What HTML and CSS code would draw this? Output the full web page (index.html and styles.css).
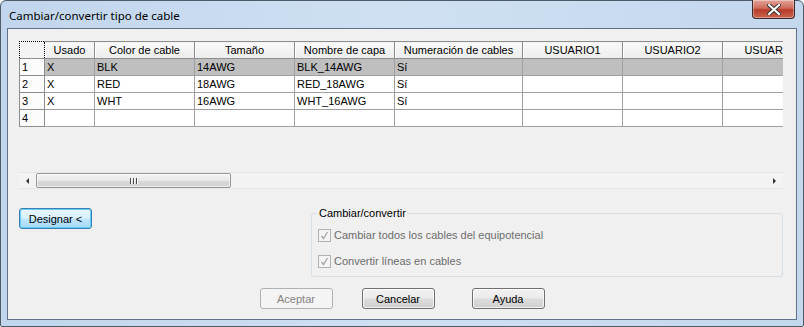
FILE: index.html
```html
<!DOCTYPE html>
<html lang="es">
  <head>
    <meta charset="UTF-8" />
    <title>Cambiar/convertir tipo de cable</title>
    <link rel="stylesheet" href="styles.css">
  </head>
  <body>
    <div class="window">
      <header class="titlebar">
        <span class="title">Cambiar/convertir tipo de cable</span>
        <button class="close" aria-label="Cerrar">
          <svg width="14" height="11" viewBox="0 0 14 11">
            <path d="M2 1 L12 10 M12 1 L2 10" stroke="#3b3b3b" stroke-width="4" stroke-linecap="square"/>
            <path d="M2 1 L12 10 M12 1 L2 10" stroke="#fff" stroke-width="2" stroke-linecap="square"/>
          </svg>
        </button>
      </header>

      <main class="client">
        <section class="grid">
          <div class="grid-body">
            <table>
              <colgroup>
                <col class="c-head" />
                <col class="c-50" />
                <col class="c-100" />
                <col class="c-100" />
                <col class="c-100" />
                <col class="c-128" />
                <col class="c-100" />
                <col class="c-100" />
                <col class="c-100" />
              </colgroup>
              <thead>
                <tr>
                  <th class="corner"></th>
                  <th>Usado</th>
                  <th>Color de cable</th>
                  <th>Tamaño</th>
                  <th>Nombre de capa</th>
                  <th>Numeración de cables</th>
                  <th>USUARIO1</th>
                  <th>USUARIO2</th>
                  <th>USUARIO3</th>
                </tr>
              </thead>
              <tbody>
                <tr class="selected">
                  <th>1</th><td>X</td><td>BLK</td><td>14AWG</td><td>BLK_14AWG</td><td>Sí</td><td></td><td></td><td></td>
                </tr>
                <tr>
                  <th>2</th><td>X</td><td>RED</td><td>18AWG</td><td>RED_18AWG</td><td>Sí</td><td></td><td></td><td></td>
                </tr>
                <tr>
                  <th>3</th><td>X</td><td>WHT</td><td>16AWG</td><td>WHT_16AWG</td><td>Sí</td><td></td><td></td><td></td>
                </tr>
                <tr>
                  <th>4</th><td></td><td></td><td></td><td></td><td></td><td></td><td></td><td></td>
                </tr>
              </tbody>
            </table>
          </div>
          <div class="hscroll">
            <span class="arrow left"></span>
            <span class="thumb"><i></i><i></i><i></i></span>
            <span class="track"></span>
            <span class="arrow right"></span>
          </div>
        </section>

        <div class="middle">
          <button class="btn is-default">Designar &lt;</button>
          <fieldset class="group">
            <legend>Cambiar/convertir</legend>
            <label class="check">
              <span class="box"><svg width="9" height="9" viewBox="0 0 9 9"><path d="M1.5 5 L3.5 7.5 L7.5 1" fill="none" stroke="#a8a8a8" stroke-width="1.4"/></svg></span>
              Cambiar todos los cables del equipotencial
            </label>
            <label class="check">
              <span class="box"><svg width="9" height="9" viewBox="0 0 9 9"><path d="M1.5 5 L3.5 7.5 L7.5 1" fill="none" stroke="#a8a8a8" stroke-width="1.4"/></svg></span>
              Convertir líneas en cables
            </label>
          </fieldset>
        </div>

        <footer class="actions">
          <button class="btn is-disabled">Aceptar</button>
          <button class="btn cancel">Cancelar</button>
          <button class="btn help">Ayuda</button>
        </footer>
      </main>
    </div>
  </body>
</html>
```

FILE: styles.css
```css
*,
*::before,
*::after {
  box-sizing: border-box;
  margin: 0;
  padding: 0;
}
body {
  background: #fff;
  font-family: "Liberation Sans", Arial, sans-serif;
  font-size: 11px;
  color: #000;
}

.window {
  width: 804px;
  height: 327px;
  display: flex;
  flex-direction: column;
  border: 1px solid #4f5b68;
  border-radius: 6px 6px 2px 2px;
  padding: 0 6px 6px;
  background: linear-gradient(to right, #c1d5ec, #cfe0f3 50%, #c3d7ed);
}

.titlebar {
  height: 27px;
  display: flex;
  align-items: flex-start;
  justify-content: space-between;
}
.title {
  font-family: "Noto Sans", "Open Sans", sans-serif;
  font-size: 11.5px;
  line-height: 16px;
  padding: 7px 0 0 2px;
  color: #000;
}
.close {
  width: 43px;
  height: 19px;
  margin: -1px 2px 0 0;
  border: 1px solid #3f2a2a;
  border-top: none;
  border-radius: 0 0 4px 4px;
  background: linear-gradient(#e3a59a, #cf6b5b 45%, #b83a2a 55%, #c9664f);
  box-shadow: inset 0 0 0 1px rgba(255, 255, 255, 0.35);
  display: grid;
  place-items: center;
}

.client {
  flex: 1;
  display: flex;
  flex-direction: column;
  border: 1px solid #5f7288;
  background: #f0f0f0;
  padding: 12px 13px 0 11px;
}

/* grid */
.grid {
  height: 148px;
  display: flex;
  flex-direction: column;
}
.grid-body {
  height: 131px;
  overflow: hidden;
}
table {
  border-collapse: collapse;
  table-layout: fixed;
  width: 803px;
}
.c-head { width: 25px; }
.c-50 { width: 50px; }
.c-100 { width: 100px; }
.c-128 { width: 128px; }

th,
td {
  height: 17px;
  padding: 0 2px;
  white-space: nowrap;
  overflow: hidden;
  font-weight: normal;
  text-align: left;
  line-height: 15px;
}
thead th {
  text-align: center;
  background: linear-gradient(#fafafa, #ececec);
  border-right: 1px solid #8d8d8d;
  border-bottom: 1px solid #8d8d8d;
  border-top: 1px solid #8d8d8d;
  box-shadow: inset 1px 0 #fff;
}
thead th.corner {
  border: 1px dotted #000;
  background: #f4f4f4;
}
tbody th {
  background: #fcfcfc;
  border: 1px solid #8d8d8d;
  padding-left: 2px;
}
tbody td {
  background: #fff;
  border-right: 1px solid #a0a0a0;
  border-bottom: 1px solid #a0a0a0;
  padding-left: 2px;
}
tbody tr.selected td {
  background: #bfbfbf;
}

.hscroll {
  height: 17px;
  display: flex;
  align-items: stretch;
  background: #f3f3f3;
  border-top: 1px solid #e6e6e6;
  border-bottom: 1px solid #e8e8e8;
}
.arrow {
  width: 17px;
  display: grid;
  place-items: center;
}
.arrow::before {
  content: "";
  border-top: 3px solid transparent;
  border-bottom: 3px solid transparent;
}
.arrow.left::before {
  border-right: 3px solid #333;
}
.arrow.right::before {
  border-left: 3px solid #333;
}
.thumb {
  width: 195px;
  border: 1px solid #979797;
  border-radius: 2px;
  background: linear-gradient(#f4f4f4, #e8e8e8 50%, #d9d9d9 51%, #d3d3d3);
  box-shadow: inset 0 0 0 1px rgba(255, 255, 255, 0.6);
  display: flex;
  justify-content: center;
  align-items: center;
  gap: 2px;
}
.thumb i {
  width: 1px;
  height: 6px;
  background: #4a4a4a;
  box-shadow: 1px 0 #fff;
}
.track {
  flex: 1;
}

/* middle row */
.middle {
  display: flex;
  align-items: flex-start;
  margin-top: 18px;
}
.btn {
  font-family: "Liberation Sans", Arial, sans-serif;
  font-size: 11px;
  font-weight: 400;
  color: #000;
  width: 73px;
  height: 21px;
  border: 1px solid #707070;
  border-radius: 3px;
  background: linear-gradient(#f2f2f2, #ebebeb 48%, #dddddd 52%, #cfcfcf);
  box-shadow: inset 0 0 0 1px rgba(255, 255, 255, 0.7);
}
.btn.is-default {
  margin-top: 1px;
  border-color: #3c7fb1;
  background: linear-gradient(#eaf6fd, #d9f0fc 48%, #bee6fd 52%, #a7d9f5);
  box-shadow: inset 0 0 0 1px #62cbf7;
}
.btn.is-disabled {
  color: #838383;
  border-color: #adb2b5;
  background: #f4f4f4;
  box-shadow: none;
}

.group {
  margin-left: auto;
  width: 472px;
  height: 70px;
  border: 1px solid #d5dfe5;
  border-radius: 3px;
  padding: 7px 6px 0;
  display: flex;
  flex-direction: column;
  gap: 10px;
}
.group legend {
  padding: 0 1px;
  line-height: 13px;
}
.check {
  display: flex;
  align-items: center;
  gap: 3px;
  height: 16px;
  color: #6d6d6d;
}
.box {
  width: 13px;
  height: 13px;
  border: 1px solid #b1b1b1;
  background: #f4f4f4;
  display: grid;
  place-items: center;
}

/* bottom buttons */
.actions {
  display: flex;
  justify-content: center;
  margin-top: 11px;
  padding-left: 2px;
}
.actions .cancel {
  margin-left: 29px;
}
.actions .help {
  margin-left: 37px;
}
```
